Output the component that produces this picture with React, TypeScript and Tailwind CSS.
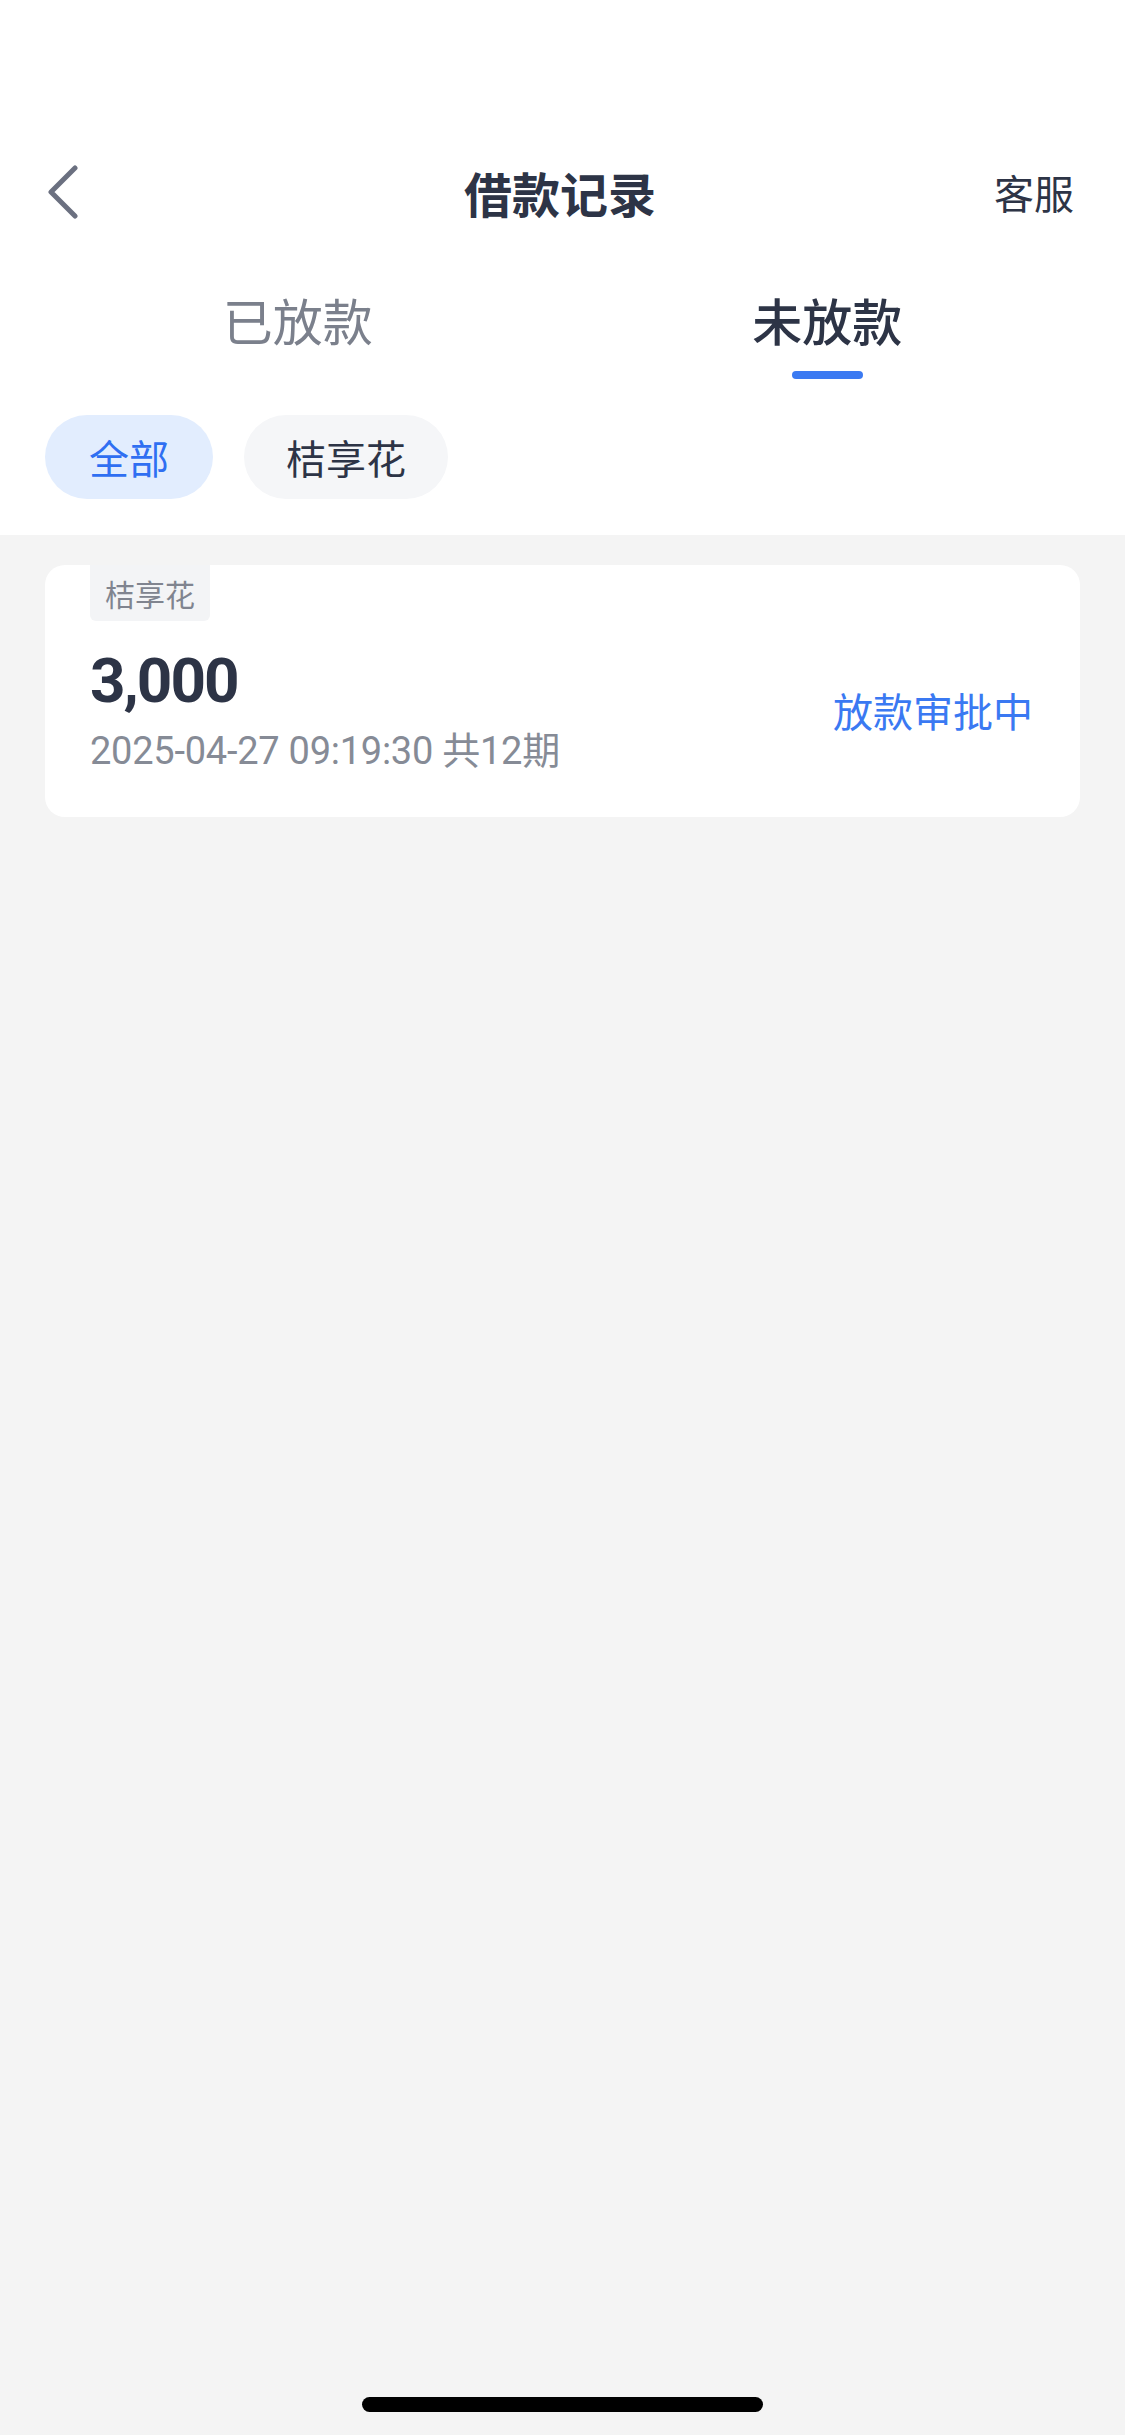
import { useState } from "react"

const FONT = { fontFamily: '"Noto Sans CJK SC", "Noto Sans", Roboto, sans-serif' }
const NUM_FONT = { fontFamily: 'Roboto, "Noto Sans CJK SC", sans-serif' }

const TABS = ["已放款", "未放款"]
const CHIPS = ["全部", "桔享花"]

function BackIcon() {
  return (
    <svg width="34" height="54" viewBox="0 0 34 54" fill="none">
      <polyline
        points="29,3 5,27 29,51"
        stroke="#6b7080"
        strokeWidth="5"
        strokeLinecap="round"
        strokeLinejoin="round"
      />
    </svg>
  )
}

export default function App() {
  const [tab, setTab] = useState(1)
  const [chip, setChip] = useState(0)

  return (
    <div className="min-h-[2435px] w-[1125px] bg-[#f4f4f4] flex flex-col" style={FONT}>
      {/* Top white area */}
      <div className="bg-white">
        <div className="h-[132px]" />

        {/* Nav bar */}
        <div className="h-[120px] flex items-center px-[46px]">
          <div className="flex-1 flex items-center">
            <BackIcon />
          </div>
          <h1 className="text-[48px] leading-none font-semibold text-[#2d3446]">借款记录</h1>
          <div className="flex-1 flex justify-end pr-[5px]">
            <span className="text-[40px] leading-none text-[#2d3446]">客服</span>
          </div>
        </div>

        {/* Tabs */}
        <div className="flex px-[33px] pt-[42px]">
          {TABS.map((t, i) => (
            <button
              key={t}
              onClick={() => setTab(i)}
              className="flex-1 flex flex-col items-center"
            >
              <span
                className={
                  i === tab
                    ? "text-[50px] leading-none font-medium text-[#2d3446]"
                    : "text-[50px] leading-none text-[#7b808c]"
                }
              >
                {t}
              </span>
              <span
                className={
                  i === tab
                    ? "mt-[27px] w-[71px] h-[8px] rounded-full bg-[#3b7af2]"
                    : "mt-[27px] w-[71px] h-[8px] rounded-full bg-transparent"
                }
              />
            </button>
          ))}
        </div>

        {/* Filter chips */}
        <div className="flex gap-[31px] px-[45px] pt-[36px] pb-[36px]">
          {CHIPS.map((c, i) => (
            <button
              key={c}
              onClick={() => setChip(i)}
              className={
                i === chip
                  ? "h-[84px] px-[44px] rounded-full bg-[#e2edfe] text-[#2f6ff2] text-[40px] leading-none"
                  : "h-[84px] px-[42px] rounded-full bg-[#f5f6f8] text-[#2d3446] text-[40px] leading-none"
              }
            >
              {c}
            </button>
          ))}
        </div>
      </div>

      {/* Records */}
      <div className="px-[45px] pt-[30px] flex flex-col gap-[24px]">
        <div className="bg-white rounded-[20px] h-[252px] pl-[45px] pr-[47px]">
          <div className="w-[120px] h-[56px] bg-[#f3f4f6] rounded-b-[6px] flex items-center justify-center">
            <span className="text-[30px] leading-none text-[#80848f]">桔享花</span>
          </div>
          <div className="flex items-center justify-between mt-[29px]">
            <div className="flex flex-col">
              <span className="text-[62px] leading-none font-bold text-[#2d3446] tracking-[-2px]" style={NUM_FONT}>
                3,000
              </span>
              <span className="mt-[20px] text-[38px] leading-none text-[#868b96] tracking-[-0.25px]" style={NUM_FONT}>
                2025-04-27 09:19:30 共12期
              </span>
            </div>
            <span className="text-[40px] leading-none text-[#3a79f2]">放款审批中</span>
          </div>
        </div>
      </div>

      {/* Home indicator */}
      <div className="mt-auto flex justify-center pb-[23px]">
        <div className="w-[401px] h-[15px] rounded-full bg-black" />
      </div>
    </div>
  )
}
